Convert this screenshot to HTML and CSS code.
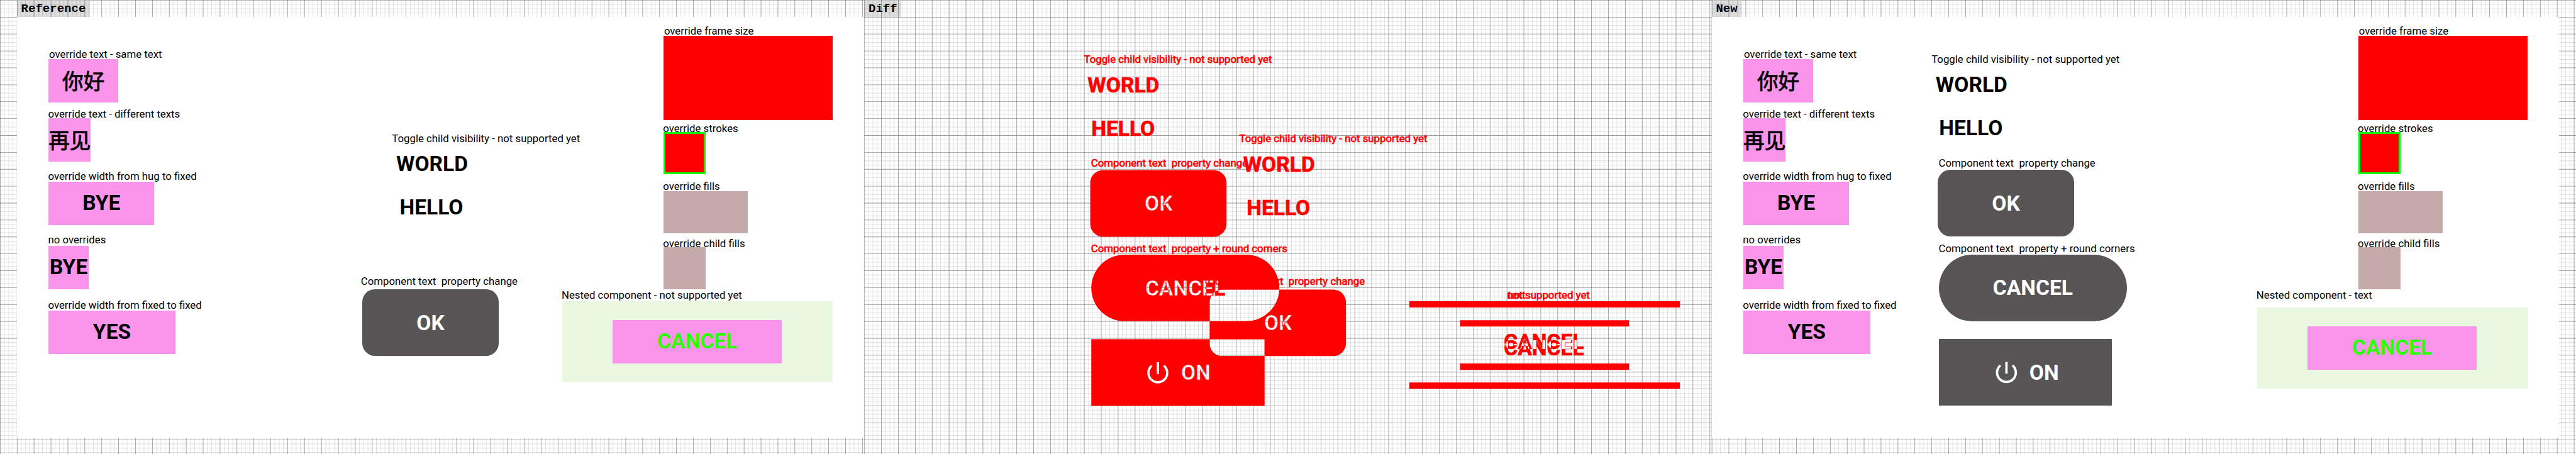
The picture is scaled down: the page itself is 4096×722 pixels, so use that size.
FILE: index.html
```
<!DOCTYPE html>
<html lang="en">
<head>
<meta charset="utf-8">
<title>Reference / Diff / New</title>
<link rel="stylesheet" href="styles.css">
</head>
<body>
<main class="stage">
  <svg class="backdrop" viewBox="0 0 4876 860" aria-hidden="true">
    <defs>
      <g id="grid">
        <path class="minor" stroke-width="860" stroke-dasharray="1 7" d="M0 430H1636M1636 430H3240M3240 430H4876"/>
        <path class="minor" stroke-width="4876" stroke-dasharray="1 7" d="M2438 0V860"/>
        <path class="major" stroke-width="860" stroke-dasharray="1 31" d="M0 430H1636M1636 430H3240M3240 430H4876"/>
        <path class="major" stroke-width="4876" stroke-dasharray="1 31" d="M2438 0V860"/>
      </g>
    </defs>
    <use href="#grid"/>
  </svg>

  <section class="panel">
    <h2 class="tag">Reference</h2>
    <div class="sheet">
      <div class="col col-text">
        <p class="label in1">override text - same text</p>
        <div class="chip w132 cjk" lang="zh">你好</div>
        <p class="label">override text - different texts</p>
        <div class="chip w80 cjk" lang="zh">再见</div>
        <p class="label">override width from hug to fixed</p>
        <div class="chip w200">BYE</div>
        <p class="label">no overrides</p>
        <div class="chip w76">BYE</div>
        <p class="label">override width from fixed to fixed</p>
        <div class="chip w240">YES</div>
      </div>
      <div class="col col-ref">
        <p class="label toggle">Toggle child visibility - not supported yet</p>
        <p class="big world">WORLD</p>
        <p class="big hello">HELLO</p>
        <p class="label comp">Component text&nbsp; property change</p>
        <div class="button rounded">OK</div>
      </div>
      <div class="col col-frames">
        <p class="label in1">override frame size</p>
        <div class="frame red-large"></div>
        <p class="label">override strokes</p>
        <div class="frame stroked"></div>
        <p class="label">override fills</p>
        <div class="frame mauve wide"></div>
        <p class="label">override child fills</p>
        <div class="frame mauve"></div>
        <p class="label nested-label">Nested component - not supported yet</p>
        <div class="nested"><div class="chip w320 green">CANCEL</div></div>
      </div>
    </div>
  </section>

  <section class="panel">
    <h2 class="tag">Diff</h2>
    <svg class="diff" viewBox="1636 32 1604 828">
      <defs>
        <clipPath id="letters">
          <use href="#ok1"/><use href="#cancel"/><use href="#ok2"/><use href="#on"/><use href="#power"/>
        </clipPath>
        <clipPath id="pill"><rect x="2066" y="482" width="356" height="126" rx="63"/></clipPath>
        <clipPath id="btn"><rect x="2290" y="548" width="258" height="126" rx="24"/></clipPath>
        <clipPath id="onbox"><rect x="2066" y="642" width="328" height="126"/></clipPath>
        <clipPath id="upper"><use href="#c1"/></clipPath>
        <clipPath id="lower"><use href="#c2"/></clipPath>
      </defs>
      <g class="red">
        <text class="slabel" x="2052" y="119.5">Toggle child visibility - not supported yet</text>
        <text class="sbig" x="2059" y="175">WORLD</text>
        <text class="sbig" x="2066" y="257">HELLO</text>
        <text class="slabel" x="2065.5" y="315">Component text&#160; property change</text>
        <text class="slabel" x="2346" y="269.5">Toggle child visibility - not supported yet</text>
        <text class="sbig" x="2353.5" y="325">WORLD</text>
        <text class="sbig" x="2360" y="407">HELLO</text>
        <text class="slabel" x="2065.5" y="477">Component text&#160; property + round corners</text>
        <rect x="2064" y="322" width="258" height="126" rx="24"/>
        <rect x="2066" y="482" width="356" height="126" rx="63"/>
        <rect x="2290" y="548" width="258" height="126" rx="24"/>
        <rect x="2066" y="642" width="328" height="126"/>
      </g>
      <g class="knock">
        <text id="ok1" class="sbig" x="2167" y="399">OK</text>
        <text id="cancel" class="sbig" x="2168" y="559">CANCEL</text>
        <text id="ok2" class="sbig" x="2393" y="625">OK</text>
        <text id="on" class="sbig" x="2236" y="719">ON</text>
        <path id="power" transform="translate(2165.3 679) scale(2.2222)" d="M13 3h-2v10h2V3zm4.83 2.17l-1.42 1.42C17.99 7.86 19 9.81 19 12c0 3.87-3.13 7-7 7s-7-3.13-7-7c0-2.19 1.01-4.14 2.58-5.42L6.17 5.17C4.23 6.82 3 9.26 3 12c0 4.97 4.03 9 9 9s9-4.03 9-9c0-2.74-1.23-5.18-3.17-6.83z"/>
      </g>
      <g clip-path="url(#letters)"><use href="#grid"/></g>
      <g class="red"><text class="slabel" x="2287" y="539">Component text&#160; property change</text></g>
      <g clip-path="url(#btn)">
        <g clip-path="url(#pill)">
          <rect class="white" x="2290" y="548" width="140" height="60"/><use href="#grid"/>
          <g class="red"><text class="sbig" x="2168" y="559">CANCEL</text></g>
        </g>
        <g clip-path="url(#onbox)"><rect class="white" x="2290" y="642" width="104" height="32"/><use href="#grid"/></g>
      </g>
      <g class="red">
        <path d="M2668 570h512v12h-512zM2668 724h512v12h-512zM2764 606h320v12h-320zM2764 688h320v12h-320z"/>
        <text class="slabel" x="2853.3" y="565">not supported yet</text>
        <text class="slabel" x="2854" y="565">text</text>
        <text id="c1" class="sbig" x="2847" y="661">CANCEL</text>
        <text id="c2" class="sbig" x="2847" y="673">CANCEL</text>
      </g>
      <g clip-path="url(#upper)"><g clip-path="url(#lower)"><rect class="white" x="2840" y="620" width="170" height="60"/><use href="#grid"/></g></g>
    </svg>
  </section>

  <section class="panel">
    <h2 class="tag">New</h2>
    <div class="sheet">
      <div class="col col-text">
        <p class="label in1">override text - same text</p>
        <div class="chip w132 cjk" lang="zh">你好</div>
        <p class="label">override text - different texts</p>
        <div class="chip w80 cjk" lang="zh">再见</div>
        <p class="label">override width from hug to fixed</p>
        <div class="chip w200">BYE</div>
        <p class="label">no overrides</p>
        <div class="chip w76">BYE</div>
        <p class="label">override width from fixed to fixed</p>
        <div class="chip w240">YES</div>
      </div>
      <div class="col col-new">
        <p class="label toggle">Toggle child visibility - not supported yet</p>
        <p class="big world">WORLD</p>
        <p class="big hello">HELLO</p>
        <p class="label comp">Component text&nbsp; property change</p>
        <div class="button rounded">OK</div>
        <p class="label comp">Component text&nbsp; property + round corners</p>
        <div class="button pill">CANCEL</div>
        <div class="button square">
          <svg class="power" viewBox="0 0 24 24"><path d="M13 3h-2v10h2V3zm4.83 2.17l-1.42 1.42C17.99 7.86 19 9.81 19 12c0 3.87-3.13 7-7 7s-7-3.13-7-7c0-2.19 1.01-4.14 2.58-5.42L6.17 5.17C4.23 6.82 3 9.26 3 12c0 4.97 4.03 9 9 9s9-4.03 9-9c0-2.74-1.23-5.18-3.17-6.83z"/></svg>ON</div>
      </div>
      <div class="col col-frames low">
        <p class="label in1">override frame size</p>
        <div class="frame red-large"></div>
        <p class="label">override strokes</p>
        <div class="frame stroked"></div>
        <p class="label">override fills</p>
        <div class="frame mauve wide"></div>
        <p class="label">override child fills</p>
        <div class="frame mauve"></div>
        <p class="label nested-label">Nested component - text</p>
        <div class="nested"><div class="chip w320 green">CANCEL</div></div>
      </div>
    </div>
  </section>
</main>
</body>
</html>
```
FILE: styles.css
```
html, body { margin: 0; overflow: hidden; background: #fff; }
p, h2 { margin: 0; }

.stage {
  zoom: 0.84003;
  position: relative;
  display: flex;
  width: 4844px;
  height: 860px;
  padding-left: 32px;
  font-family: Roboto, "Noto Sans CJK SC", sans-serif;
  color: #000;
}
.backdrop { position: absolute; left: 0; top: 0; width: 4876px; height: 860px; }
.minor, .major { fill: none; stroke: #808080; }
.minor { stroke-opacity: .25; }
.major { stroke-opacity: .68; }

.panel { position: relative; flex: none; width: 1604px; height: 860px; }
.tag {
  box-sizing: border-box;
  width: max-content;
  height: 30px;
  margin-top: 2px;
  padding: 0 8px;
  background: rgba(0, 0, 0, .135);
  font: bold 22.67px/30px "Courier New", "Liberation Mono", monospace;
}
.sheet { display: flex; align-items: flex-start; height: 796px; background: #fff; }
.diff { display: block; width: 1604px; height: 828px; }

.col { display: grid; flex: none; align-items: start; justify-items: start; }
.col-text {
  width: 400px;
  margin: 58px 0 0 60px;
  grid-template-rows: 22px 92px 20px 98px 22px 98px 24px 100px 22px 82px;
}
.col-ref {
  width: 381px;
  margin: 218px 0 0 191px;
  grid-template-rows: 38px 82px 150px 28px 126px;
}
.col-new {
  width: 616px;
  margin: 68px 0 0 -44px;
  grid-template-rows: 38px 82px 76px 26px 136px 24px 160px 126px;
}
.col-frames {
  width: 512px;
  margin: 15px 0 0 0;
  grid-template-rows: 21px 163px 19px 91px 21px 87px 19px 78px 24px 154px;
}
.col-frames.low { grid-template-rows: 21px 163px 19px 91px 21px 87px 19px 78px 36px 154px; }

.label {
  height: 0;
  margin-left: -1px;
  font-size: 20px;
  line-height: 24px;
  white-space: nowrap;
}
.in1 { margin-left: 1px; }
.col-frames .label { margin-left: 191px; }
.col-frames .in1 { margin-left: 193px; }
.col-frames .nested-label { margin-left: -1px; }
.col-ref .toggle { margin-left: 59px; }
.col-ref .comp { margin-left: 0; }
.col-ref .world { margin-left: 67px; }
.col-ref .hello { margin-left: 73.5px; }
.col-ref .button { margin-left: 3px; }
.col-new .toggle { margin-left: 0; }
.col-new .comp { margin-left: 13.5px; }
.col-new .world { margin-left: 8px; }
.col-new .hello { margin-left: 14.5px; }
.col-new .button { margin-left: 14px; }
.col-new .rounded { margin-left: 12px; }

.big, .chip, .button {
  font-size: 40px;
  font-weight: 700;
  white-space: nowrap;
}
.big { height: 46px; line-height: 46px; }
.chip, .button { display: flex; align-items: center; justify-content: center; }
.chip { height: 82px; background: #fa94eb; line-height: 82px; }
.w132 { width: 132px; }
.w80 { width: 80px; }
.w200 { width: 200px; }
.w76 { width: 76px; }
.w240 { width: 240px; }
.w320 { width: 320px; }
.cjk {
  height: 76px;
  padding-top: 6px;
  font-weight: 400;
  line-height: 76px;
  -webkit-text-stroke: 1px #000;
}
.green { color: #2bff00; }

.button { height: 126px; background: #575556; color: #fff; }
.rounded { width: 258px; border-radius: 24px; }
.pill { width: 356px; border-radius: 63px; }
.square { width: 328px; gap: 17px; }
.power { width: 53.33px; height: 53.33px; fill: #fff; }

.frame { box-sizing: border-box; width: 80px; height: 80px; margin-left: 192px; }
.red-large { width: 320px; height: 160px; background: #f00; }
.stroked { background: #f00; border: 4px solid #0f0; }
.mauve { background: #c4abaa; }
.wide { width: 160px; }
.nested {
  display: flex;
  align-items: center;
  justify-content: center;
  width: 512px;
  height: 154px;
  background: #ebf8e1;
}

.slabel { font-size: 20px; }
.sbig { font-size: 40px; font-weight: 700; }
.red { fill: #f00; }
.red text { stroke: #f00; stroke-width: .8px; }
.knock { fill: #fff; }
.knock text { stroke: #f00; stroke-width: .8px; }
.white { fill: #fff; }
```
